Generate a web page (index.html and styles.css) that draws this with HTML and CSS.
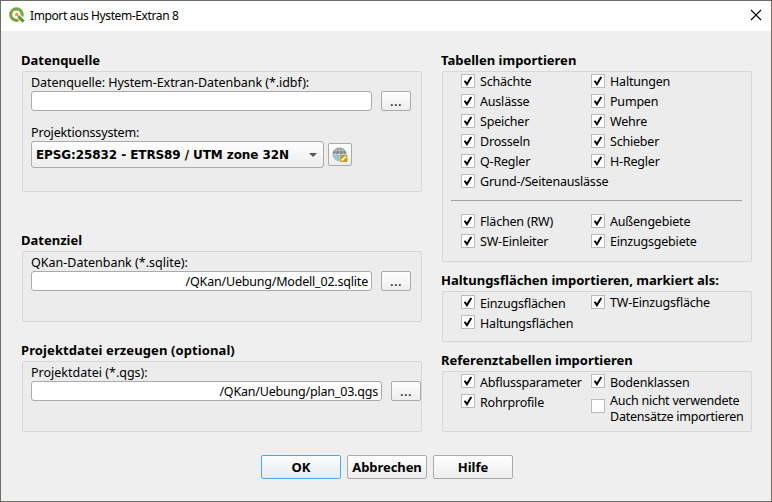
FILE: index.html
```html
<!DOCTYPE html>
<html lang="de">
<head>
<meta charset="utf-8">
<title>Import aus Hystem-Extran 8</title>
<link rel="stylesheet" href="styles.css">
</head>
<body>
<svg class="defs" width="0" height="0"><symbol id="check" viewBox="0 0 12 12"><path d="M2.6 5.8 L4.9 9.2 L9.3 2" fill="none" stroke="#000" stroke-width="2"/></symbol></svg>
<div class="dialog">
  <header class="titlebar">
    <svg class="logo" viewBox="0 0 16 16"><circle cx="7.4" cy="7.6" r="5.7" fill="none" stroke="#78a83b" stroke-width="3.2"/><path d="M8 8 L15.5 15.2" stroke="#fff" stroke-width="5"/><path d="M9.4 9.4 L14.6 14.6" stroke="#639335" stroke-width="3"/><path d="M6.3 6.1 H9.4 L8.8 7.6 L10 9 L8.8 9.9 L7.6 8.7 L6.3 9.2Z" fill="#ee913c"/></svg>
    <span class="title">Import aus Hystem-Extran 8</span>
    <svg class="close" viewBox="0 0 12 12"><path d="M1 1 L11 11 M11 1 L1 11" stroke="#000" stroke-width="1.1"/></svg>
  </header>
  <main class="content">
    <div class="column column-left">
      <section class="group source">
        <h2>Datenquelle</h2>
        <div class="box">
          <label class="l-source">Datenquelle: Hystem-Extran-Datenbank (*.idbf):</label>
          <div class="field-row"><div class="input"></div><button class="browse">...</button></div>
          <label class="second">Projektionssystem:</label>
          <div class="crs-row">
            <div class="combo"><span>EPSG:25832 - ETRS89 / UTM zone 32N</span><i class="arrow"></i></div>
            <button class="crs"><svg viewBox="0 0 16 16"><circle cx="7.5" cy="7.5" r="6.7" fill="#8ebbe0"/><path d="M.5 7.5 Q1 1 7.5 .6 Q14 1 14.5 7.5Z" fill="#959a9e"/><path d="M.5 7.5H14.5 M2 4H13 M7.5 1V14 M4.5 1.5Q2.5 7 4.5 13 M10.5 1.5Q12.5 7 10.5 13" stroke="#d4dadd" stroke-width=".6" fill="none"/><path d="M1 5H14" stroke="#62696e" stroke-width=".7"/><rect x="8" y="8" width="7.5" height="7" rx="1" fill="#c4a119"/><path d="M9.5 13.5L14 9.3" stroke="#fff8cd" stroke-width="1.8"/></svg></button>
          </div>
        </div>
      </section>
      <section class="group target">
        <h2>Datenziel</h2>
        <div class="box">
          <label>QKan-Datenbank (*.sqlite):</label>
          <div class="field-row"><div class="input">/QKan/Uebung/Modell_02.sqlite</div><button class="browse">...</button></div>
        </div>
      </section>
      <section class="group project">
        <h2 class="h-project">Projektdatei erzeugen (optional)</h2>
        <div class="box">
          <label>Projektdatei (*.qgs):</label>
          <div class="field-row wide"><div class="input">/QKan/Uebung/plan_03.qgs</div><button class="browse">...</button></div>
        </div>
      </section>
    </div>
    <div class="column column-right">
      <section class="group tables">
        <h2>Tabellen importieren</h2>
        <div class="box">
          <div class="checks">
            <div class="check"><svg><use href="#check"/></svg><span>Schächte</span></div><div class="check"><svg><use href="#check"/></svg><span>Haltungen</span></div>
            <div class="check"><svg><use href="#check"/></svg><span>Auslässe</span></div><div class="check"><svg><use href="#check"/></svg><span>Pumpen</span></div>
            <div class="check"><svg><use href="#check"/></svg><span>Speicher</span></div><div class="check"><svg><use href="#check"/></svg><span>Wehre</span></div>
            <div class="check"><svg><use href="#check"/></svg><span>Drosseln</span></div><div class="check"><svg><use href="#check"/></svg><span>Schieber</span></div>
            <div class="check"><svg><use href="#check"/></svg><span>Q-Regler</span></div><div class="check"><svg><use href="#check"/></svg><span>H-Regler</span></div>
            <div class="check"><svg><use href="#check"/></svg><span>Grund-/Seitenauslässe</span></div>
          </div>
          <div class="divider"></div>
          <div class="checks">
            <div class="check"><svg><use href="#check"/></svg><span>Flächen (RW)</span></div><div class="check"><svg><use href="#check"/></svg><span>Außengebiete</span></div>
            <div class="check"><svg><use href="#check"/></svg><span>SW-Einleiter</span></div><div class="check"><svg><use href="#check"/></svg><span>Einzugsgebiete</span></div>
          </div>
        </div>
      </section>
      <section class="group areas">
        <h2>Haltungsflächen importieren, markiert als:</h2>
        <div class="box">
          <div class="checks">
            <div class="check low"><svg><use href="#check"/></svg><span>Einzugsflächen</span></div><div class="check"><svg><use href="#check"/></svg><span>TW-Einzugsfläche</span></div>
            <div class="check low"><svg><use href="#check"/></svg><span>Haltungsflächen</span></div>
          </div>
        </div>
      </section>
      <section class="group refs">
        <h2>Referenztabellen importieren</h2>
        <div class="box">
          <div class="checks">
            <div class="check low"><svg><use href="#check"/></svg><span>Abflussparameter</span></div><div class="check low"><svg><use href="#check"/></svg><span>Bodenklassen</span></div>
            <div class="check low"><svg><use href="#check"/></svg><span>Rohrprofile</span></div><div class="check multi"><svg></svg><span>Auch nicht verwendete<br>Datensätze importieren</span></div>
          </div>
        </div>
      </section>
    </div>
  </main>
  <footer><button class="default">OK</button><button class="cancel">Abbrechen</button><button>Hilfe</button></footer>
</div>
</body>
</html>
```
FILE: styles.css
```css
* { box-sizing: border-box; }
body { margin: 0; background: #efefef; color: #000; font: 13px/18px "Noto Sans", sans-serif; }
.defs { position: absolute; }
.dialog { width: 772px; height: 502px; border: 1px solid #6e6c68; overflow: hidden; white-space: nowrap; }
.titlebar { height: 30px; background: #fff; display: flex; align-items: center; padding: 0 9px 2px 8px; font-size: 12px; }
.logo { width: 16px; height: 16px; margin-right: 5px; }
.title { flex: 1; letter-spacing: -.39px; padding-top: 2px; }
.close { width: 12px; height: 12px; }
.content { display: flex; gap: 20px; padding: 20px 0 0 21px; }
.column { display: flex; flex-direction: column; }
.column-left { width: 400px; }
.column-right { width: 310px; gap: 9px; }
h2 { margin: 0 0 0 -1px; height: 20px; font: bold 13px/18px "Noto Sans", sans-serif; }
.h-project { letter-spacing: .1px; }
.box { border: 1px solid #d7d7d7; border-radius: 2px; background: #ececec; }
.source .box { height: 121px; }
.target { margin: 39px 0 19px; }
.target .box, .project .box { height: 71px; }
.tables .box { height: 191px; }
.areas .box { height: 51px; }
.refs .box { height: 61px; }
label { display: block; height: 19px; padding-left: 8px; line-height: 21px; font-size: 12.5px; }
label.second { margin-top: 11px; letter-spacing: -.15px; }
.l-source { letter-spacing: -.06px; }
.field-row { display: flex; gap: 9px; padding-left: 8px; }
.input { width: 341px; height: 20px; background: #fff; border: 1px solid #ababab; border-radius: 3px; text-align: right; padding-right: 3px; font-size: 12.5px; line-height: 19px; letter-spacing: -.2px; }
.wide .input { width: 351px; }
button { font: bold 13px/18px "Noto Sans", sans-serif; color: #000; padding: 0; border: 1px solid #ababab; border-radius: 2px; background: linear-gradient(#fefefe, #ededed); }
.browse { width: 30px; height: 20px; flex: none; font-weight: 500; letter-spacing: .5px; color: #222; }
.crs-row { display: flex; align-items: center; gap: 4px; padding-left: 8px; }
.combo { width: 293px; height: 27px; border: 1px solid #ababab; border-radius: 3px; background: linear-gradient(#fdfdfd, #ededed); display: flex; align-items: center; justify-content: space-between; padding: 1px 6px 0 4px; font: bold 12px "DejaVu Sans", sans-serif; letter-spacing: -.09px; }
.arrow { border: 4px solid transparent; border-top: 4px solid #555; border-bottom: 0; }
.crs { width: 24px; height: 23px; display: grid; place-items: center; }
.crs svg { width: 16px; height: 16px; }
.checks { display: grid; grid-template-columns: 130px 1fr; grid-auto-rows: 20px; padding: 0 0 0 18px; }
.check { display: flex; gap: 5px; align-items: center; font-size: 12.5px; letter-spacing: -.2px; }
.check svg { width: 14px; height: 14px; margin-bottom: 2px; background: #fff; border: 1px solid #bcbcbc; flex: none; }
.low span { padding-top: 2px; }
.divider { height: 1px; background: #a0a0a0; margin: 8px 9px 11px 8px; }
.areas .checks { padding-top: 1px; }
.check.multi { height: 33px; line-height: 16px; letter-spacing: -.25px; }
.multi svg { margin-bottom: 5px; }
footer { display: flex; gap: 6px; padding: 23px 0 0 260px; }
footer button { width: 80px; height: 24px; }
footer .cancel { letter-spacing: -.08px; }
footer .default { border-color: #45a9fb; background: linear-gradient(#fdfefe, #e3eaf1); }
```
